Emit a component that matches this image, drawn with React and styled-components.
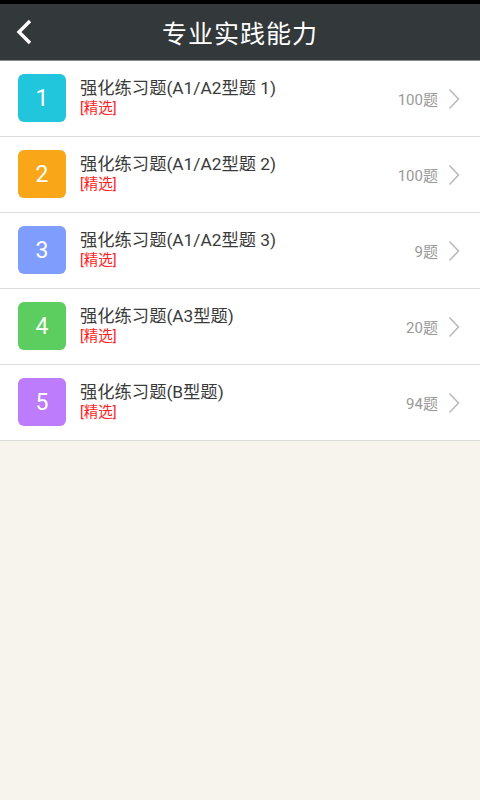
import React from 'react';
import styled, { createGlobalStyle } from 'styled-components';

const GlobalStyle = createGlobalStyle`
  html, body {
    margin: 0;
    padding: 0;
    background: #f7f4ed;
    font-family: Roboto, "Noto Sans CJK SC", sans-serif;
  }
`;

const Page = styled.div`
  min-height: 800px;
  background: #f7f4ed;
`;

const StatusBar = styled.div`
  height: 4px;
  background: #000;
`;

const Header = styled.div`
  height: 56px;
  background: #33383b;
  border-bottom: 1px solid #8a8c8e;
  display: flex;
  align-items: center;
  justify-content: center;
  position: relative;
`;

const BackButton = styled.div`
  position: absolute;
  left: 10px;
  top: 14px;
  width: 28px;
  height: 28px;
  display: flex;
  align-items: center;
  justify-content: center;
`;

const Title = styled.h1`
  margin: 0;
  color: #fff;
  font-size: 25px;
  font-weight: 400;
  letter-spacing: 1px;
`;

const List = styled.ul`
  margin: 0;
  padding: 0;
  list-style: none;
  background: #fff;
`;

const Row = styled.li`
  height: 75px;
  display: flex;
  align-items: center;
  padding: 0 20px 0 18px;
  border-bottom: 1px solid #dcdcdc;
`;

const Badge = styled.div`
  width: 48px;
  height: 48px;
  border-radius: 6px;
  background: ${(p) => p.color};
  color: #fff;
  font-size: 23px;
  display: flex;
  align-items: center;
  justify-content: center;
  flex-shrink: 0;
  margin-top: -1px;
`;

const Info = styled.div`
  flex: 1;
  margin-left: 14px;
  display: flex;
  flex-direction: column;
  margin-top: -1px;
`;

const Name = styled.div`
  font-size: 17.3px;
  color: #3a3a3a;
  line-height: 21px;
`;

const Tag = styled.div`
  font-size: 14.5px;
  color: #f22;
  line-height: 20px;
`;

const Count = styled.div`
  font-size: 15px;
  color: #999;
  margin-right: 10px;
`;

const Chevron = () => (
  <svg width="12" height="22" viewBox="0 0 12 22">
    <path d="M1.5 1.5 L10.5 11 L1.5 20.5" fill="none" stroke="#bbb" strokeWidth="1.6" />
  </svg>
);

const items = [
  { n: 1, color: '#21c6dc', name: '强化练习题(A1/A2型题 1)', count: 100 },
  { n: 2, color: '#f9a619', name: '强化练习题(A1/A2型题 2)', count: 100 },
  { n: 3, color: '#7f9dfc', name: '强化练习题(A1/A2型题 3)', count: 9 },
  { n: 4, color: '#5ccd5f', name: '强化练习题(A3型题)', count: 20 },
  { n: 5, color: '#bc7cfb', name: '强化练习题(B型题)', count: 94 },
];

export default function App() {
  return (
    <Page>
      <GlobalStyle />
      <StatusBar />
      <Header>
        <BackButton>
          <svg width="18" height="26" viewBox="0 0 18 26">
            <path d="M15 2 L4 13 L15 24" fill="none" stroke="#fff" strokeWidth="3.4" />
          </svg>
        </BackButton>
        <Title>专业实践能力</Title>
      </Header>
      <List>
        {items.map((it) => (
          <Row key={it.n}>
            <Badge color={it.color}>{it.n}</Badge>
            <Info>
              <Name>{it.name}</Name>
              <Tag>[精选]</Tag>
            </Info>
            <Count>{it.count}题</Count>
            <Chevron />
          </Row>
        ))}
      </List>
    </Page>
  );
}
